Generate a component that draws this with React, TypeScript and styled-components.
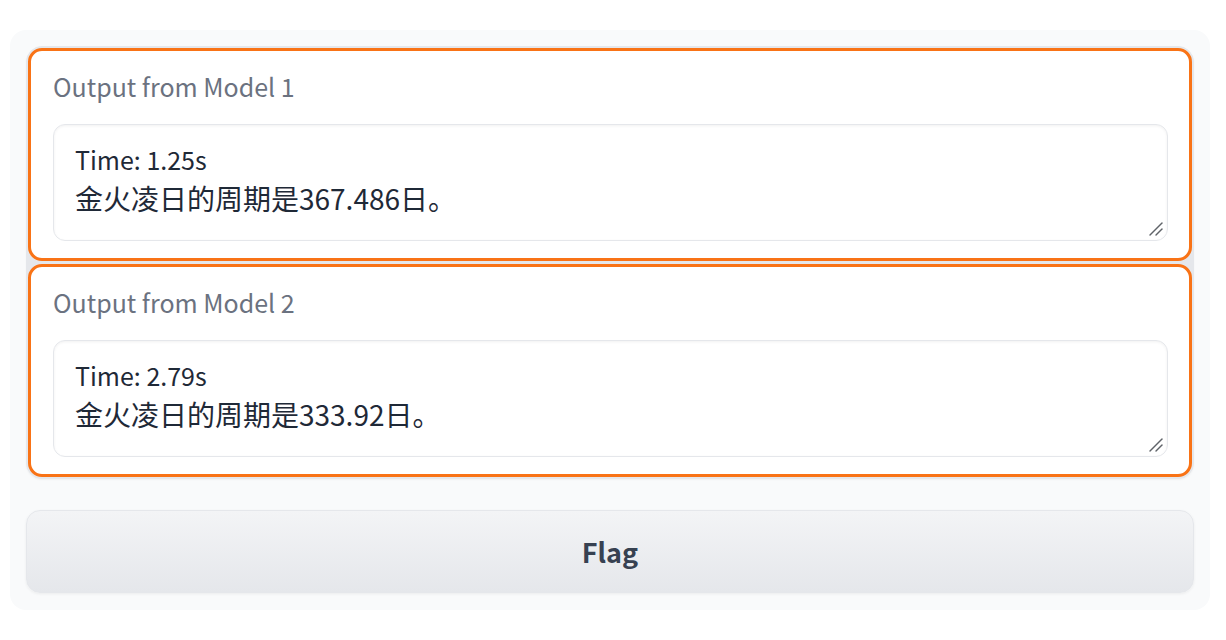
import React from "react";
import styled, { createGlobalStyle } from "styled-components";

const Global = createGlobalStyle`
  html, body { margin: 0; padding: 0; background: #ffffff; }
  body { font-family: "Noto Sans CJK SC", "Noto Sans", sans-serif; }
  * { box-sizing: border-box; }
`;

const Page = styled.div`
  padding: 30px 16px 30px 10px;
`;

const Panel = styled.div`
  width: 1200px;
  background: #f9fafb;
  border-radius: 16px;
  padding: 16px 16px 17px 16px;
  display: flex;
  flex-direction: column;
  gap: 31px;
`;

const Group = styled.div`
  border: 1px solid #e5e7eb;
  border-radius: 16px;
  background: #e5e7eb;
  display: flex;
  flex-direction: column;
  gap: 1px;
  overflow: hidden;
  box-shadow: 0 1px 2px rgba(0, 0, 0, 0.04);
`;

const Block = styled.div`
  background: #ffffff;
  border: 3px solid #f97316;
  border-radius: 14px;
  margin: 1px;
  padding: 18px 21px 17px 22px;
  display: flex;
  flex-direction: column;
  gap: 21px;
`;

const Label = styled.span`
  font-size: 25px;
  line-height: 34px;
  color: #6b7280;
`;

const OutputBox = styled.div`
  position: relative;
  width: 100%;
  height: 117px;
  overflow: hidden;
  border: 1px solid #e5e7eb;
  border-radius: 12px;
  background: #ffffff;
  box-shadow: inset 0 1px 3px rgba(0, 0, 0, 0.06);
  padding: 15px 21px;
  color: #1f2937;
`;

const Line = styled.div<{ $size: number }>`
  font-size: ${(p) => p.$size}px;
  line-height: 39px;
  white-space: pre;
`;

const Grip = styled.svg`
  position: absolute;
  right: 3px;
  bottom: 3px;
  width: 16px;
  height: 16px;
`;

const FlagButton = styled.button`
  height: 83px;
  width: 100%;
  border: 1px solid #e5e7eb;
  border-radius: 14px;
  background: linear-gradient(to bottom, #f3f4f6, #e5e7eb);
  box-shadow: 0 1px 3px rgba(0, 0, 0, 0.06);
  font-family: "Noto Sans CJK SC", "Noto Sans", sans-serif;
  font-size: 27px;
  font-weight: 600;
  color: #374151;
  cursor: pointer;
`;

const outputs = [
  { label: "Output from Model 1", time: "Time: 1.25s", text: "金火凌日的周期是367.486日。" },
  { label: "Output from Model 2", time: "Time: 2.79s", text: "金火凌日的周期是333.92日。" },
];

export default function App() {
  return (
    <>
      <Global />
      <Page>
        <Panel>
          <Group>
            {outputs.map((o) => (
              <Block key={o.label}>
                <Label>{o.label}</Label>
                <OutputBox>
                  <Line $size={25}>{o.time}</Line>
                  <Line $size={28}>{o.text}</Line>
                  <Grip viewBox="0 0 16 16">
                    <path d="M2 14 L14 2" stroke="#5f6368" strokeWidth="1.4" strokeLinecap="round" />
                    <path d="M8 14 L14 8" stroke="#5f6368" strokeWidth="1.4" strokeLinecap="round" />
                  </Grip>
                </OutputBox>
              </Block>
            ))}
          </Group>
          <FlagButton>Flag</FlagButton>
        </Panel>
      </Page>
    </>
  );
}
